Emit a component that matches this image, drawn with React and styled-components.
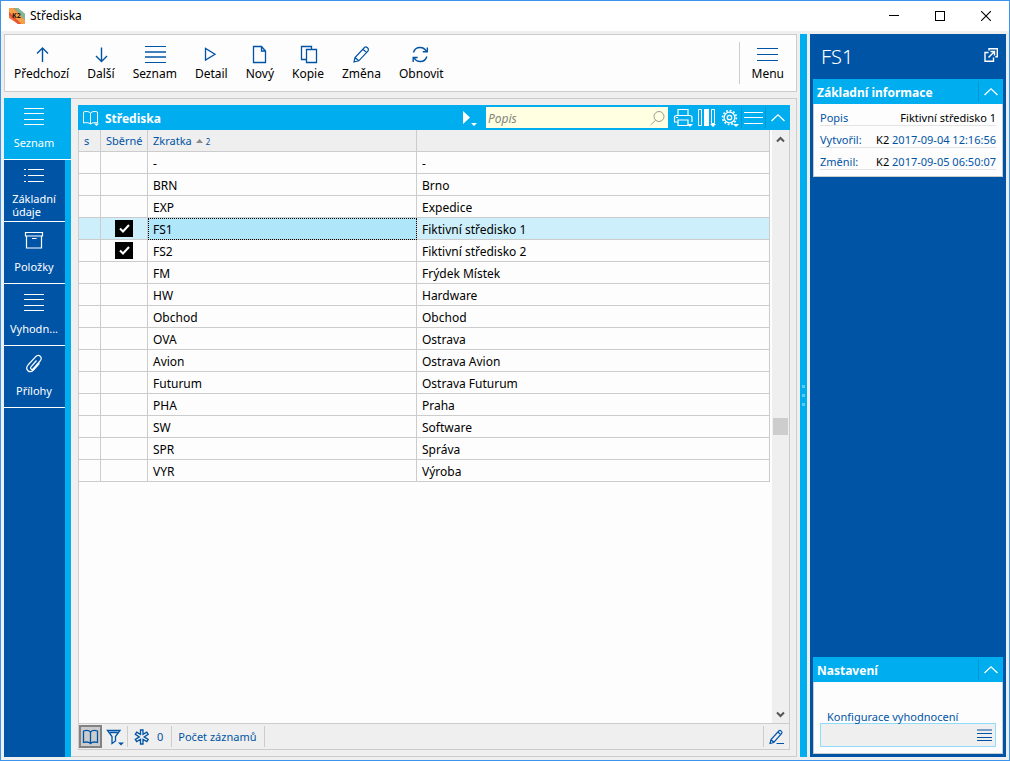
import React from "react";
import styled, { createGlobalStyle, css } from "styled-components";

const blue = "#0054a6";
const cyan = "#00adef";
const line = "#cccccc";
const face = "#efefef";
const paper = "#fdfdfd";

const GlobalStyle = createGlobalStyle`
  * { box-sizing: border-box; }
  body {
    margin: 0;
    font-family: "Noto Sans", "Open Sans", sans-serif;
    font-size: 12px;
    line-height: 16px;
    color: #000;
  }
  button, input { font: inherit; color: inherit; }
  button { border: 0; padding: 0; background: none; }
  svg { display: block; flex: none; }
`;

const Window = styled.div`
  display: flex;
  flex-direction: column;
  height: 100vh;
  min-height: 560px;
  border: 1px solid #3c94ec;
  background: ${face};
`;

const TitleBar = styled.header`
  display: flex;
  align-items: center;
  height: 30px;
  padding-left: 8px;
  background: #fff;
`;

const WindowTitle = styled.h1`
  flex: 1;
  margin: 0 0 0 5px;
  font-size: 12px;
  font-weight: 400;
`;

const WindowButton = styled.button`
  display: grid;
  place-items: center;
  width: 46px;
  height: 28px;
`;

const Body = styled.div`
  flex: 1;
  display: flex;
  gap: 3px;
  min-height: 0;
  padding: 3px;
`;

const Workspace = styled.div`
  flex: 1;
  display: flex;
  flex-direction: column;
  gap: 6px;
  min-width: 0;
`;

const Toolbar = styled.nav`
  display: flex;
  align-items: center;
  height: 58px;
  border: 1px solid ${line};
  background: ${paper};
`;

const ToolButton = styled.button`
  display: flex;
  flex-direction: column;
  align-items: center;
  gap: 2px;
  height: 42px;
  padding: 0 ${(p) => (p.$wide ? 12 : 9)}px;
  border-left: ${(p) => (p.$wide ? `1px solid ${line}` : 0)};
  margin-left: ${(p) => (p.$wide ? "auto" : 0)};
  color: #000;
  svg { color: ${blue}; }
`;

const Content = styled.div`
  flex: 1;
  display: flex;
  min-height: 0;
`;

const SideNav = styled.nav`
  width: 67px;
  background: ${cyan};
`;

const SideButton = styled.button`
  display: flex;
  flex-direction: column;
  align-items: center;
  justify-content: space-between;
  width: ${(p) => (p.$active ? 67 : 61)}px;
  height: 62px;
  padding: 5px ${(p) => (p.$active ? 7 : 1)}px ${(p) => (p.$twoLines ? 3 : 8)}px 0;
  border-bottom: 1px solid #fff;
  background: ${(p) => (p.$active ? cyan : blue)};
  color: #fff;
  font-size: 11px;
  line-height: ${(p) => (p.$twoLines ? 13 : 16)}px;
  text-align: left;
`;

const SideFill = styled.div`
  width: 61px;
  height: calc(100% - 310px);
  background: ${blue};
`;

const PanelFrame = styled.div`
  flex: 1;
  display: flex;
  min-width: 0;
  padding: 6px 6px 6px 7px;
  border: 1px solid ${line};
  border-left: 0;
`;

const Panel = styled.section`
  flex: 1;
  display: flex;
  flex-direction: column;
  min-width: 0;
  border: 1px solid ${line};
  border-top: 0;
`;

const PanelHeader = styled.div`
  display: flex;
  align-items: center;
  height: 25px;
  margin: 0 -1px;
  padding-left: 4px;
  background: ${cyan};
  color: #fff;
`;

const PanelTitle = styled.h2`
  flex: 1;
  margin: 0;
  padding: 2px 0 0 ${(p) => (p.$afterIcon ? 5 : 0)}px;
  font-size: 12px;
  font-weight: 700;
`;

const IconButton = styled.button`
  display: grid;
  place-items: center;
  width: ${(p) => p.$w || 24}px;
  height: 21px;
  border-left: ${(p) => (p.$divided ? "1px solid #0097d2" : 0)};
  color: inherit;
`;

const Search = styled.label`
  display: flex;
  align-items: center;
  width: 182px;
  height: 21px;
  margin: 0 3px 0 7px;
  padding: 0 2px;
  background: #ffffe1;
  color: #9a9a94;
`;

const SearchInput = styled.input`
  flex: 1;
  min-width: 0;
  padding: 2px 0 0;
  border: 0;
  outline: 0;
  background: none;
  font-style: italic;
  &::placeholder { color: #85857c; opacity: 1; }
`;

const GridArea = styled.div`
  flex: 1;
  display: flex;
  min-height: 0;
  background: ${paper};
`;

const TableWrap = styled.div`
  flex: 1;
  min-width: 0;
  overflow: hidden;
`;

const Table = styled.table`
  width: 100%;
  table-layout: fixed;
  border-collapse: separate;
  border-spacing: 0;
`;

const cell = css`
  height: 22px;
  border-right: 1px solid ${line};
  border-bottom: 1px solid ${line};
  text-align: left;
  white-space: nowrap;
`;

const HeadCell = styled.th`
  ${cell}
  padding: 0 5px;
  background: ${face};
  color: ${blue};
  font-size: 11px;
  font-weight: 400;
`;

const Sort = styled.span`
  margin-left: 4px;
  font-size: 8px;
  line-height: 8px;
  svg { display: inline-block; margin-right: 3px; vertical-align: 2px; }
`;

const Cell = styled.td`
  ${cell}
  padding: ${(p) => (p.$tick ? 0 : 2)}px 5px 0;
  background: ${(p) => (p.$focus ? "#b0e6fa" : p.$selected ? "#cceffb" : paper)};
  outline: ${(p) => (p.$focus ? "1px dotted #000" : 0)};
  outline-offset: -1px;
`;

const Tick = styled.label`
  display: grid;
  place-items: center;
  width: 18px;
  height: 17px;
  margin: 0 auto;
  color: #fff;
  & > * { grid-area: 1 / 1; }
  svg { z-index: 1; pointer-events: none; }
`;

const TickBox = styled.input`
  appearance: none;
  width: 18px;
  height: 17px;
  margin: 0;
  background: #000;
`;

const ScrollBar = styled.div`
  display: flex;
  flex-direction: column;
  align-items: center;
  width: 17px;
  margin-left: 2px;
  background: ${face};
`;

const ScrollButton = styled.button`
  display: grid;
  place-items: center;
  width: 17px;
  height: 18px;
  color: #555;
`;

const ScrollTrack = styled.div`
  flex: 1;
  display: flex;
  align-items: center;
`;

const Thumb = styled.div`
  width: 15px;
  height: 17px;
  background: #cdcdcd;
`;

const StatusBar = styled.footer`
  display: flex;
  align-items: center;
  height: 26px;
  border-top: 1px solid ${line};
  color: ${blue};
  font-size: 11px;
`;

const StatusItem = styled.div`
  display: flex;
  align-items: center;
  gap: 7px;
  height: 21px;
  padding: ${(p) => (p.$tight ? "0 3px 0 4px" : "0 8px 0 6px")};
  border-right: 1px solid ${line};
`;

const BookToggle = styled.button`
  display: grid;
  place-items: center;
  width: 23px;
  height: 23px;
  border: 2px solid #828282;
  background: #cccccc;
  color: ${blue};
`;

const StatusButton = styled.button`
  display: grid;
  place-items: center;
  color: ${blue};
`;

const EditButton = styled(StatusButton)`
  width: 26px;
  height: 21px;
  margin-left: auto;
  border-left: 1px solid ${line};
`;

const Splitter = styled.div`
  display: flex;
  flex-direction: column;
  align-items: center;
  justify-content: center;
  gap: 6px;
  width: 7px;
  background: ${cyan};
`;

const Dot = styled.span`
  width: 3px;
  height: 3px;
  background: #5ccbf6;
`;

const Aside = styled.aside`
  display: flex;
  flex-direction: column;
  width: 196px;
  padding: 0 3px 3px;
  background: ${blue};
`;

const AsideTop = styled.div`
  display: flex;
  align-items: center;
  justify-content: space-between;
  height: 45px;
  padding: 0 5px 3px 8px;
  color: #fff;
`;

const RecordName = styled.h2`
  margin: 0;
  padding-top: 3px;
  font-size: 20px;
  line-height: 28px;
  font-weight: 300;
`;

const Section = styled.section`
  margin-top: ${(p) => (p.$bottom ? "auto" : 0)};
`;

const SectionHeader = styled.div`
  display: flex;
  align-items: center;
  height: 25px;
  padding-left: 4px;
  background: ${cyan};
  color: #fff;
`;

const SectionBody = styled.div`
  padding: ${(p) => (p.$form ? "27px 6px 6px" : "0 6px 6px")};
  border: 1px solid ${line};
  border-top: 0;
  background: ${paper};
  font-size: 11px;
`;

const Facts = styled.dl`
  margin: 0;
`;

const Fact = styled.div`
  display: flex;
  justify-content: space-between;
  align-items: center;
  height: 22px;
  padding-top: 6px;
  border-bottom: 1px solid #e4e4e4;
  color: ${blue};
  white-space: nowrap;
  dd { margin: 0; }
  b { color: #000; font-weight: 400; }
`;

const FieldLabel = styled.label`
  display: block;
  padding: 1px 0 0 7px;
  line-height: 13px;
  color: ${blue};
`;

const Field = styled.div`
  display: flex;
  align-items: center;
  height: 24px;
  padding-right: 3px;
  border: 1px solid #8fdcf9;
  background: ${face};
`;

const FieldInput = styled.input`
  flex: 1;
  min-width: 0;
  border: 0;
  outline: 0;
  background: none;
`;

function Icon({ w, h, sw = 1, crisp, children }) {
  return (
    <svg
      width={w}
      height={h}
      viewBox={`0 0 ${w} ${h}`}
      fill="none"
      stroke="currentColor"
      strokeWidth={sw}
      shapeRendering={crisp ? "crispEdges" : "auto"}
      aria-hidden="true"
    >
      {children}
    </svg>
  );
}

const ArrowUp = () => (
  <Icon w={22} h={22} sw={1.4}><path d="M11.500 20V6M6 11.500 11.500 6l5.500 5.500" /></Icon>
);
const ArrowDown = () => (
  <Icon w={22} h={22} sw={1.4}><path d="M11.500 5.500v14M6 14l5.500 5.500L17 14" /></Icon>
);
const Lines4 = () => (
  <Icon w={22} h={22} crisp>
    <path d="M1 4.500h21M1 20.500h21" />
    <path d="M1 10h21M1 15h21" strokeWidth="2" opacity=".75" />
  </Icon>
);
const Lines3 = () => (
  <Icon w={22} h={22} crisp><path d="M0 6.500h21M0 12.500h21M0 18.500h21" /></Icon>
);
const Play = () => (
  <Icon w={22} h={22} sw={1.3}><path d="M5.500 6.500v11.500L15 12.250z" /></Icon>
);
const Page = () => (
  <Icon w={22} h={22} sw={1.3}><path d="M4.500 4.500h8L16.500 9v11.500h-12zM12.500 4.500V9h4" /></Icon>
);
const Copy = () => (
  <Icon w={22} h={22} sw={1.3}><path d="M9 17.500H4.500v-13h10V7M9.500 7.500h10v13h-10z" /></Icon>
);
const Pencil = () => (
  <Icon w={22} h={22} sw={1.2}>
    <path d="M4 20l1-4.500L14.500 5.500c1.800-1.500 5 1.200 3.600 3.400L8.800 18.800zM5 15.500l3.800 3.300M13 7.200l3.600 3.400" />
  </Icon>
);
const Refresh = () => (
  <Icon w={22} h={22} sw={1.4}>
    <path d="M3.500 10.500C4.500 7 7 5.500 10 5.500c3 0 5.200 1.500 6.300 4M17.300 5.500v4.300h-4.500M16.800 14.500c-1 3.500-3.500 5-6.500 5s-5.200-1.500-6.300-4M3.200 20v-4.500h4.500" />
  </Icon>
);

const SideLines = () => (
  <Icon w={20} h={26} crisp><path d="M0 5.500h20M0 10.500h20M0 16.500h20M0 21.500h20" /></Icon>
);
const SideList = () => (
  <Icon w={20} h={26} crisp>
    <path d="M4 4.500h16M4 10.500h16M4 16.500h16M0 4.500h2M0 10.500h2M0 16.500h2" />
  </Icon>
);
const SideBox = () => (
  <Icon w={20} h={26} sw={1.2}><path d="M1.500 5.500h17v3.500h-17zM2.500 9v12h15V9M8 11.500h4.500" /></Icon>
);
const SideClip = () => (
  <Icon w={20} h={26} sw={1.2}>
    <path d="M12.500 9.500 6.800 16c-1 1.500 1 3.200 2.300 1.800l7-7.800c3-3.800-1.200-7.500-4.600-4.200L4 14c-3.500 4.500 1.500 9 5.500 5l6-6.700" />
  </Icon>
);

const Book = () => (
  <Icon w={18} h={18}>
    <path d="M8.500 4C7 2.200 3.500 2.200 1.500 3v11c2-.6 5.500-.6 7 1 1.500-1.600 5-1.600 7-1V3c-2-.8-5.500-.8-7 1zv11" />
    <path d="M8.500 4v11" />
    <path d="M12 14.500h5l-2.500 2.500z" fill="currentColor" stroke="none" />
  </Icon>
);
const BookOpen = () => (
  <Icon w={18} h={16} sw={1.3}>
    <path d="M8.500 3C7 1.300 3.500 1.300 1.500 2v11.500c2-.6 5.500-.6 7 1 1.500-1.600 5-1.600 7-1V2c-2-.7-5.500-.7-7 1zM8.500 3v11.500" />
  </Icon>
);
const PlayCaret = () => (
  <Icon w={18} h={18}>
    <path d="M2 2v13l7-6.500zM10 14h6l-3 3z" fill="currentColor" stroke="none" />
  </Icon>
);
const Magnifier = () => (
  <Icon w={16} h={16}><circle cx="9" cy="6.500" r="5" /><path d="M5.500 10.200 1 14.700" /></Icon>
);
const Printer = () => (
  <Icon w={20} h={20} sw={1.2}>
    <path d="M5 7.500v-6h10v6M5 14H1.500V9.500c0-1.500.8-2 2.500-2h12.500c1.700 0 2.500.5 2.500 2V14M5 12h10v5.500H5zM3 9.500h2" />
    <path d="M14 16h6l-3 3z" fill="currentColor" stroke="none" />
  </Icon>
);
const Columns = () => (
  <Icon w={18} h={20}>
    <path d="M.5 1.500h3v16h-3zM13.500 1.500h3v14h-3z" />
    <path d="M6 1h5v17H6zM12 16h6l-3 3z" fill="currentColor" stroke="none" />
  </Icon>
);
const Gear = () => (
  <Icon w={18} h={20}>
    <circle cx="8.500" cy="9.500" r="5.400" strokeWidth="1.300" />
    <circle cx="8.500" cy="9.500" r="2.200" strokeWidth="1.300" />
    <circle cx="8.500" cy="9.500" r="6.900" strokeWidth="1.600" strokeDasharray="1.800 1.810" />
    <path d="M12 16h6l-3 3z" fill="currentColor" stroke="none" />
  </Icon>
);
const Burger = () => (
  <Icon w={19} h={15} crisp><path d="M0 2.500h19M0 7.500h19M0 13.500h19" /></Icon>
);
const ChevronUp = () => (
  <Icon w={16} h={10} sw={1.3}><path d="M1.500 8 8 1.800 14.500 8" /></Icon>
);
const ScrollChevron = ({ down }) => (
  <Icon w={9} h={7} sw={2}><path d={down ? "M1 1.500l3.500 3.500L8 1.500" : "M1 5.500 4.500 2 8 5.500"} /></Icon>
);
const Filter = () => (
  <Icon w={18} h={18} sw={1.3}>
    <path d="M1.500 2.500H14L9.500 8.500v4.500L6 15.500v-7zM4 4.500h7.500" />
    <path d="M12 14.500h6l-3 3z" fill="currentColor" stroke="none" />
  </Icon>
);
const Asterisk = () => (
  <Icon w={16} h={16} sw={1.3}>
    <path d="M6.500 1h2.500v4.400l3.800-2.300 1.400 2.200-4 2.600 4 2.500-1.400 2.200L9 10.300V15H6.500v-4.700l-3.800 2.300-1.400-2.200 4-2.500-4-2.600 1.400-2.200 3.800 2.300z" />
  </Icon>
);
const PencilLine = () => (
  <Icon w={16} h={16} sw={1.2}>
    <path d="M1 14.500 2 10.500 10 1.800c1.300-1 3.800 1 2.700 2.700L4.700 13.500zM2 10.500l2.700 3M9 3l2.700 2.600M7.500 14.500H15" />
  </Icon>
);
const Popout = () => (
  <Icon w={14} h={14} sw={1.4}>
    <path d="M5 2.500V.7h8.300v8h-2M4.500 4.500H1v8.800h8.500V9.500M4.500 9.500 10.500 3.500M6.500 3.500h4v4" />
  </Icon>
);
const FieldLines = () => (
  <Icon w={15} h={14} crisp>
    <path d="M0 5.500h15M0 9.500h15M0 12.500h15" />
    <path d="M0 2h15" strokeWidth="2" opacity=".5" />
  </Icon>
);
const Logo = () => (
  <svg width="16" height="16" viewBox="0 0 16 16" aria-hidden="true">
    <path d="M0 0h9l7 6v10H9L0 10z" fill="#ef7d3b" />
    <path d="M0 0h4l12 12v4h-3L0 4z" fill="#f6a04a" />
    <path d="M9 0l7 6v6L5 0z" fill="#7fb79b" />
    <path d="M0 7l9 9h3L0 4z" fill="#e5523c" />
    <text x="3" y="10" fontSize="7" fontWeight="700" fill="#1d1713">K2</text>
  </svg>
);

const tools = [
  ["Předchozí", ArrowUp],
  ["Další", ArrowDown],
  ["Seznam", Lines4],
  ["Detail", Play],
  ["Nový", Page],
  ["Kopie", Copy],
  ["Změna", Pencil],
  ["Obnovit", Refresh],
];

const sections = [
  ["Seznam", SideLines],
  ["Základní údaje", SideList],
  ["Položky", SideBox],
  ["Vyhodn...", SideLines],
  ["Přílohy", SideClip],
];

const rows = [
  ["-", "-"],
  ["BRN", "Brno"],
  ["EXP", "Expedice"],
  ["FS1", "Fiktivní středisko 1", true],
  ["FS2", "Fiktivní středisko 2", true],
  ["FM", "Frýdek Místek"],
  ["HW", "Hardware"],
  ["Obchod", "Obchod"],
  ["OVA", "Ostrava"],
  ["Avion", "Ostrava Avion"],
  ["Futurum", "Ostrava Futurum"],
  ["PHA", "Praha"],
  ["SW", "Software"],
  ["SPR", "Správa"],
  ["VYR", "Výroba"],
];

const SmallColumn = styled.col`
  width: ${(p) => p.$w}px;
`;

function CentersTable() {
  return (
    <Table>
      <colgroup>
        <SmallColumn $w={22} />
        <SmallColumn $w={47} />
        <SmallColumn $w={269} />
        <col />
      </colgroup>
      <thead>
        <tr>
          <HeadCell>s</HeadCell>
          <HeadCell>Sběrné</HeadCell>
          <HeadCell>
            Zkratka
            <Sort>
              <svg width="7" height="4" viewBox="0 0 7 4" aria-hidden="true">
                <path d="M0 4h7L3.500 0z" fill="#8a8a8a" />
              </svg>
              2
            </Sort>
          </HeadCell>
          <HeadCell aria-label="Popis" />
        </tr>
      </thead>
      <tbody>
        {rows.map(([code, name, checked]) => {
          const selected = code === "FS1";
          return (
            <tr key={code}>
              <Cell $selected={selected} />
              <Cell $selected={selected} $tick>
                {checked && (
                  <Tick>
                    <TickBox type="checkbox" defaultChecked aria-label={`Sběrné ${code}`} />
                    <Icon w={11} h={9} sw={2}><path d="M1 4.500 4 7.500 10 1" /></Icon>
                  </Tick>
                )}
              </Cell>
              <Cell $selected={selected} $focus={selected}>{code}</Cell>
              <Cell $selected={selected}>{name}</Cell>
            </tr>
          );
        })}
      </tbody>
    </Table>
  );
}

export default function App() {
  return (
    <>
      <GlobalStyle />
      <Window>
        <TitleBar>
          <Logo />
          <WindowTitle>Střediska</WindowTitle>
          <WindowButton aria-label="Minimalizovat">
            <Icon w={10} h={10} crisp><path d="M0 4.500h10" /></Icon>
          </WindowButton>
          <WindowButton aria-label="Maximalizovat">
            <Icon w={10} h={10} crisp><path d="M.5.5h9v9h-9z" /></Icon>
          </WindowButton>
          <WindowButton aria-label="Zavřít">
            <Icon w={10} h={10} sw={1.1}><path d="M0 0l10 10M10 0 0 10" /></Icon>
          </WindowButton>
        </TitleBar>
        <Body>
          <Workspace>
            <Toolbar>
              {tools.map(([label, Glyph]) => (
                <ToolButton key={label}><Glyph />{label}</ToolButton>
              ))}
              <ToolButton $wide><Lines3 />Menu</ToolButton>
            </Toolbar>
            <Content>
              <SideNav>
                {sections.map(([label, Glyph], i) => (
                  <SideButton key={label} $active={i === 0} $twoLines={label.includes(" ")}>
                    <Glyph />
                    <span>
                      {label.split(" ").map((word, n) => (
                        <React.Fragment key={word}>{n > 0 && <br />}{word}</React.Fragment>
                      ))}
                    </span>
                  </SideButton>
                ))}
                <SideFill />
              </SideNav>
              <PanelFrame>
                <Panel>
                  <PanelHeader>
                    <Book />
                    <PanelTitle $afterIcon>Střediska</PanelTitle>
                    <IconButton $w={18} aria-label="Hledat podle"><PlayCaret /></IconButton>
                    <Search>
                      <SearchInput type="text" placeholder="Popis" aria-label="Popis" />
                      <Magnifier />
                    </Search>
                    <IconButton aria-label="Tisk"><Printer /></IconButton>
                    <IconButton aria-label="Sloupce"><Columns /></IconButton>
                    <IconButton $w={22} aria-label="Nastavení"><Gear /></IconButton>
                    <IconButton $divided aria-label="Nabídka"><Burger /></IconButton>
                    <IconButton $divided $w={25} aria-label="Sbalit"><ChevronUp /></IconButton>
                  </PanelHeader>
                  <GridArea>
                    <TableWrap><CentersTable /></TableWrap>
                    <ScrollBar>
                      <ScrollButton aria-label="Nahoru"><ScrollChevron /></ScrollButton>
                      <ScrollTrack><Thumb /></ScrollTrack>
                      <ScrollButton aria-label="Dolů"><ScrollChevron down /></ScrollButton>
                    </ScrollBar>
                  </GridArea>
                  <StatusBar>
                    <BookToggle aria-label="Kniha"><BookOpen /></BookToggle>
                    <StatusItem $tight>
                      <StatusButton aria-label="Filtr"><Filter /></StatusButton>
                    </StatusItem>
                    <StatusItem><Asterisk />0</StatusItem>
                    <StatusItem>Počet záznamů</StatusItem>
                    <EditButton aria-label="Upravit"><PencilLine /></EditButton>
                  </StatusBar>
                </Panel>
              </PanelFrame>
            </Content>
          </Workspace>
          <Splitter><Dot /><Dot /><Dot /></Splitter>
          <Aside>
            <AsideTop>
              <RecordName>FS1</RecordName>
              <IconButton $w={14} aria-label="Otevřít v okně"><Popout /></IconButton>
            </AsideTop>
            <Section>
              <SectionHeader>
                <PanelTitle as="h3">Základní informace</PanelTitle>
                <IconButton $divided $w={25} aria-label="Sbalit"><ChevronUp /></IconButton>
              </SectionHeader>
              <SectionBody>
                <Facts>
                  <Fact><dt>Popis</dt><dd><b>Fiktivní středisko 1</b></dd></Fact>
                  <Fact><dt>Vytvořil:</dt><dd><b>K2</b> 2017-09-04 12:16:56</dd></Fact>
                  <Fact><dt>Změnil:</dt><dd><b>K2</b> 2017-09-05 06:50:07</dd></Fact>
                </Facts>
              </SectionBody>
            </Section>
            <Section $bottom>
              <SectionHeader>
                <PanelTitle as="h3">Nastavení</PanelTitle>
                <IconButton $divided $w={25} aria-label="Sbalit"><ChevronUp /></IconButton>
              </SectionHeader>
              <SectionBody $form>
                <FieldLabel htmlFor="config">Konfigurace vyhodnocení</FieldLabel>
                <Field>
                  <FieldInput id="config" type="text" />
                  <StatusButton aria-label="Vybrat"><FieldLines /></StatusButton>
                </Field>
              </SectionBody>
            </Section>
          </Aside>
        </Body>
      </Window>
    </>
  );
}
